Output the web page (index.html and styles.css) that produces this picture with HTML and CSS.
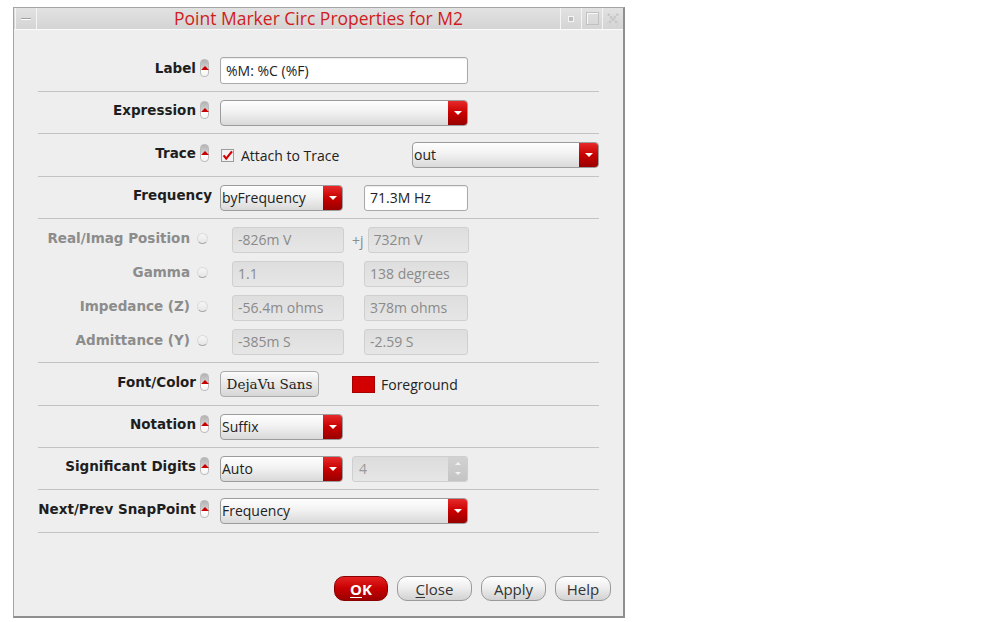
FILE: index.html
```html
<!DOCTYPE html>
<html lang="en">
<head>
    <meta charset="UTF-8">
    <title>Point Marker Circ Properties for M2</title>
    <link rel="stylesheet" href="styles.css">
</head>
<body>

<div class="window">
    <div class="titlebar">
        <div class="tb-left">
            <span class="tb-btn tb-menu"><span class="dash"></span></span>
        </div>
        <div class="title">Point Marker Circ Properties for M2</div>
        <div class="tb-right">
            <span class="tb-btn"><span class="dot"></span></span>
            <span class="tb-btn"><span class="square"></span></span>
            <span class="tb-btn">
                <svg width="14" height="14" viewBox="0 0 14 14">
                    <path d="M2 2 L12 12 M12 2 L2 12" stroke="#c4c4c4" stroke-width="2.4" stroke-dasharray="2 1.4" fill="none"/>
                </svg>
            </span>
        </div>
    </div>

    <div class="content">
        <div class="form">
            <div class="row">
                <div class="label">Label <i class="toggle"></i></div>
                <div class="input wide">%M: %C (%F)</div>
            </div>

            <div class="row">
                <div class="label">Expression <i class="toggle"></i></div>
                <div class="select wide"><span class="text"></span><span class="arrow"></span></div>
            </div>

            <div class="row tall">
                <div class="label">Trace <i class="toggle"></i></div>
                <svg class="check" width="13" height="13" viewBox="0 0 13 13">
                    <rect x="0.5" y="0.5" width="12" height="12" fill="#f2f2f2" stroke="#9c9c9c"/>
                    <path d="M2.6 6.4 L5.2 9.6 L11 2.4" fill="none" stroke="#d40000" stroke-width="2.2"/>
                </svg>
                <span class="plain">Attach to Trace</span>
                <div class="select trace"><span class="text">out</span><span class="arrow"></span></div>
            </div>

            <div class="row">
                <div class="label no-icon">Frequency</div>
                <div class="select short"><span class="text">byFrequency</span><span class="arrow"></span></div>
                <div class="input freq">71.3M Hz</div>
            </div>

            <div class="group">
                <div class="subrow">
                    <div class="label off">Real/Imag Position <i class="radio"></i></div>
                    <div class="input dis first">-826m V</div>
                    <span class="plus">+j</span>
                    <div class="input dis second-j">732m V</div>
                </div>
                <div class="subrow">
                    <div class="label off">Gamma <i class="radio"></i></div>
                    <div class="input dis first">1.1</div>
                    <div class="input dis second">138 degrees</div>
                </div>
                <div class="subrow">
                    <div class="label off">Impedance (Z) <i class="radio"></i></div>
                    <div class="input dis first">-56.4m ohms</div>
                    <div class="input dis second">378m ohms</div>
                </div>
                <div class="subrow">
                    <div class="label off">Admittance (Y) <i class="radio"></i></div>
                    <div class="input dis first">-385m S</div>
                    <div class="input dis second">-2.59 S</div>
                </div>
            </div>

            <div class="row tall">
                <div class="label">Font/Color <i class="toggle"></i></div>
                <div class="font-btn">DejaVu Sans</div>
                <span class="swatch"></span>
                <span class="plain">Foreground</span>
            </div>

            <div class="row">
                <div class="label">Notation <i class="toggle"></i></div>
                <div class="select short"><span class="text">Suffix</span><span class="arrow"></span></div>
            </div>

            <div class="row">
                <div class="label">Significant Digits <i class="toggle"></i></div>
                <div class="select short"><span class="text">Auto</span><span class="arrow"></span></div>
                <div class="spin">
                    <span class="text">4</span>
                    <span class="spin-arrows"><i class="up"></i><i class="down"></i></span>
                </div>
            </div>

            <div class="row tall">
                <div class="label">Next/Prev SnapPoint <i class="toggle"></i></div>
                <div class="select wide"><span class="text">Frequency</span><span class="arrow"></span></div>
            </div>
        </div>

        <div class="actions">
            <button class="btn ok"><u>O</u>K</button>
            <button class="btn close"><u>C</u>lose</button>
            <button class="btn apply">Apply</button>
            <button class="btn help">Help</button>
        </div>
    </div>
</div>

</body>
</html>
```

FILE: styles.css
```css
body {
    margin: 0;
    background: #fff;
    font-family: "Open Sans", "DejaVu Sans", sans-serif;
    font-size: 14px;
    color: #222;
}

.window {
    margin: 7px 0 0 13px;
    width: 612px;
    height: 611px;
    box-sizing: border-box;
    border: 1px solid #a4a4a4;
    border-right: 2px solid #8f8f8f;
    border-bottom: 2px solid #8f8f8f;
    background: #eeeeee;
    display: flex;
    flex-direction: column;
}

/* title bar */
.titlebar {
    height: 21px;
    background: linear-gradient(#e2e2e2, #d4d4d4);
    border-bottom: 1px solid #fbfbfb;
    display: grid;
    grid-template-columns: 1fr auto 1fr;
}

.tb-left {
    display: flex;
    padding-left: 1px;
}

.tb-right {
    display: flex;
    justify-content: flex-end;
}

.tb-btn {
    width: 20px;
    border-left: 1px solid #f4f4f4;
    display: flex;
    align-items: center;
    justify-content: center;
}

.tb-menu {
    border-right: 1px solid #f4f4f4;
    border-left: 1px solid #f4f4f4;
}

.dash {
    width: 10px;
    height: 1px;
    background: #a0a0a0;
    box-shadow: 0 1px 0 #fff;
}

.dot {
    width: 4px;
    height: 4px;
    background: #bdbdbd;
    border: 1px solid #f6f6f6;
}

.square {
    width: 11px;
    height: 11px;
    border: 1px solid #c0c0c0;
    box-shadow: inset 1px 1px 0 #f8f8f8;
}

.title {
    font-size: 17.5px;
    line-height: 21px;
    color: #d01c1c;
}

/* form */
.content {
    flex: 1;
    padding-top: 20px;
    display: flex;
    flex-direction: column;
}

.form {
    margin: 0 24px;
}

.row {
    height: 41px;
    display: flex;
    align-items: center;
    border-bottom: 1px solid #c3c3c3;
}

.row.tall {
    height: 42px;
}

.label {
    width: 182px;
    flex: none;
    box-sizing: border-box;
    padding: 0 11px 5px 0;
    display: flex;
    justify-content: flex-end;
    align-items: center;
    gap: 4px;
    font-family: "DejaVu Sans", sans-serif;
    font-weight: bold;
    font-size: 13.5px;
    color: #1e1e1e;
    white-space: nowrap;
}

.label.no-icon {
    padding-right: 8px;
}

.label.off {
    color: #8c8c8c;
    padding: 0 12px 4px 0;
    gap: 7px;
}

.toggle {
    width: 9px;
    height: 18px;
    flex: none;
    box-sizing: border-box;
    border: 1px solid #bcbcbc;
    border-radius: 4px;
    background: linear-gradient(#b4b4b4, #d0d0d0 50%, #fff 58%, #f4f4f4);
    position: relative;
}

.toggle::after {
    content: '';
    position: absolute;
    left: -0.5px;
    top: 6px;
    border-left: 4px solid transparent;
    border-right: 4px solid transparent;
    border-bottom: 4px solid #c80000;
}

.radio {
    width: 11px;
    height: 11px;
    flex: none;
    box-sizing: border-box;
    border-radius: 50%;
    border: 1px solid #dadada;
    border-bottom-color: #a8a8a8;
    background: linear-gradient(#f6f6f6, #e6e6e6);
    margin-top: 1px;
}

.input {
    height: 27px;
    box-sizing: border-box;
    border: 1px solid #a9a9a9;
    border-radius: 3px;
    background: #fff;
    box-shadow: inset 0 1px 1px rgba(0, 0, 0, 0.08);
    padding: 0 5px;
    line-height: 25px;
    white-space: nowrap;
}

.wide {
    width: 248px;
}

.freq {
    margin-left: 21px;
    width: 104px;
    height: 26px;
    line-height: 24px;
}

.input.dis {
    height: 26px;
    line-height: 24px;
    background: linear-gradient(#dedede, #e6e6e6);
    border-color: #cfcfcf;
    box-shadow: none;
    color: #8a8a8a;
}

.first {
    margin-left: 12px;
    width: 112px;
}

.second {
    margin-left: 20px;
    width: 104px;
}

.second-j {
    margin-left: 4px;
    width: 101px;
}

.plus {
    margin-left: 8px;
    color: #8a8a8a;
}

.group {
    padding: 4px 0 3px;
    border-bottom: 1px solid #c3c3c3;
}

.subrow {
    height: 34px;
    display: flex;
    align-items: center;
}

/* drop downs */
.select {
    height: 26px;
    box-sizing: border-box;
    border: 1px solid #9c9c9c;
    border-radius: 4px;
    background: linear-gradient(#fefefe, #f2f2f2 45%, #d9d9d9);
    display: flex;
    overflow: hidden;
}

.select .text {
    flex: 1;
    padding-left: 1px;
    line-height: 24px;
}

.select .arrow {
    width: 19px;
    background: linear-gradient(#e62a2a, #c80000 50%, #980000);
    display: flex;
    align-items: center;
    justify-content: center;
}

.select .arrow::after {
    content: '';
    border-left: 4px solid transparent;
    border-right: 4px solid transparent;
    border-top: 4px solid #fff;
}

.short {
    width: 123px;
}

.trace {
    margin-left: auto;
    width: 187px;
}

.check {
    margin-left: 1px;
    margin-top: 1px;
}

.plain {
    margin-left: 7px;
}

.font-btn {
    width: 99px;
    height: 26px;
    box-sizing: border-box;
    border: 1px solid #ababab;
    border-radius: 4px;
    background: linear-gradient(#fbfbfb, #e8e8e8 50%, #d6d6d6);
    font-family: "DejaVu Serif", serif;
    font-size: 13.5px;
    line-height: 24px;
    text-align: center;
}

.swatch {
    margin-left: 33px;
    width: 23px;
    height: 17px;
    box-sizing: border-box;
    background: #d20000;
    border: 1px solid #a80000;
}

.swatch + .plain {
    margin-left: 6px;
}

.spin {
    margin-left: 9px;
    width: 116px;
    height: 26px;
    box-sizing: border-box;
    border: 1px solid #cfcfcf;
    border-radius: 3px;
    background: linear-gradient(#dcdcdc, #e6e6e6);
    display: flex;
    overflow: hidden;
    color: #999;
}

.spin .text {
    flex: 1;
    padding-left: 6px;
    line-height: 24px;
}

.spin-arrows {
    width: 19px;
    background: linear-gradient(#d2d2d2, #c4c4c4);
    display: flex;
    flex-direction: column;
    align-items: center;
    justify-content: center;
    gap: 7px;
}

.spin-arrows i {
    border-left: 3px solid transparent;
    border-right: 3px solid transparent;
}

.spin-arrows .up {
    border-bottom: 3px solid #f2f2f2;
}

.spin-arrows .down {
    border-top: 3px solid #f2f2f2;
}

/* bottom buttons */
.actions {
    margin-top: auto;
    padding: 0 12px 15px 0;
    display: flex;
    justify-content: flex-end;
    gap: 9px;
}

.btn {
    height: 25px;
    border: 1px solid #9a9a9a;
    border-radius: 10px;
    background: linear-gradient(#ffffff, #ececec 50%, #d2d2d2);
    font-family: "Open Sans", sans-serif;
    font-size: 15px;
    color: #333;
    padding: 0;
    line-height: 22px;
}

.btn u {
    text-decoration-thickness: 1px;
    text-underline-offset: 2px;
}

.ok {
    width: 54px;
    border-color: #8a0000;
    background: linear-gradient(#e42222, #c60000 50%, #9c0000);
    color: #fff;
    font-weight: bold;
}

.close {
    width: 75px;
}

.apply {
    width: 65px;
}

.help {
    width: 56px;
}
```
